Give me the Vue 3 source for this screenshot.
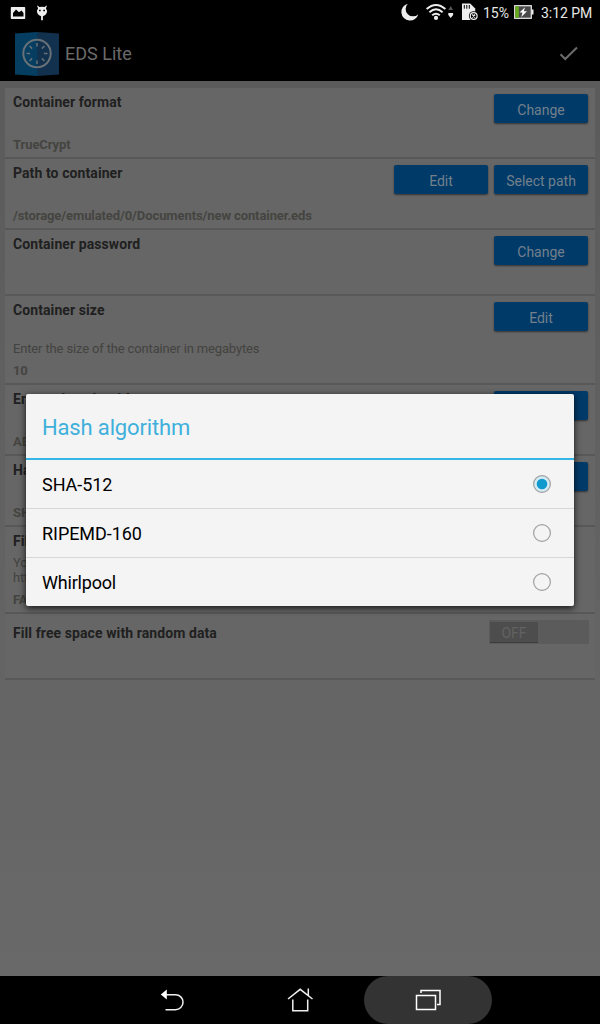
<script setup>
const rows = [
  { title: 'Container format', value: 'TrueCrypt', buttons: ['Change'], height: 71 },
  { title: 'Path to container', value: '/storage/emulated/0/Documents/new container.eds', buttons: ['Edit', 'Select path'], height: 71 },
  { title: 'Container password', buttons: ['Change'], height: 66 },
  { title: 'Container size', desc: ['Enter the size of the container in megabytes'], value: '10', buttons: ['Edit'], height: 89 },
  { title: 'Encryption algorithm', value: 'AES', buttons: ['Change'], height: 71 },
  { title: 'Hash algorithm', value: 'SHA-512', buttons: ['Change'], height: 71 },
  { title: 'File system type', desc: ['You can', 'https://'], value: 'FAT', buttons: [], height: 87 },
  { title: 'Fill free space with random data', toggle: true, buttons: [], height: 66 },
]
const options = ['SHA-512', 'RIPEMD-160', 'Whirlpool']
const selected = 'SHA-512'
const ticks = [0, 45, 90, 135, 180, 225, 270, 315]
</script>

<template>
  <div class="screen">
    <header class="status">
      <svg class="s-left" width="60" height="26" viewBox="0 0 60 26">
        <path fill="#eee" fill-rule="evenodd" d="M11.500 7h13q.7 0 .7.700v10.600q0 .7-.7.700h-13q-.7 0-.7-.700v-10.600q0-.7.700-.700zM13 16.500h10.500v-3.500l-2-2.500-2.500 1.700-3-2.700-3 3.500z" />
        <path fill="#eee" d="M37.600 5.500l1.700 1.600q2.700-.9 5.400 0l1.700-1.600.5.500-1 2.200q1.700 2.300.8 4.800-1 2.600-3.800 3.200v4h-1.800v-4q-2.800-.6-3.800-3.200-.9-2.500.8-4.800l-1-2.200z" />
        <path fill="#000" d="M39 9.700h1.700v1.600h-1.700zM43.300 9.700h1.700v1.600h-1.700z" />
      </svg>
      <svg class="s-icons" width="80" height="26" viewBox="400 0 80 26">
        <path fill="#eee" d="M407.800 3.700a7.300 7.300 0 0 0 10.500 10.500a8.600 8.600 0 1 1-10.500-10.500z" />
        <g fill="none" stroke="#eee" stroke-width="1.900">
          <path d="M426.600 9q9.400-8.200 18.800 0" />
          <path d="M429.400 12.200q6.600-5.800 13.200 0" />
          <path d="M432.200 15.300q3.800-3.300 7.600 0" />
        </g>
        <circle cx="436" cy="17.900" r="2.100" fill="#eee" />
        <path fill="#555" d="M448.300 10l2.400-4 2.400 4z" />
        <path fill="#eee" d="M448.300 13h4.800v2l-2.400 3-2.400-3z" />
        <path fill="#eee" d="M462 3.500h8.200l5 5v11.500h-13.200z" />
        <path stroke="#000" stroke-width="1" d="M464.300 5v3.700M466.800 5v3.700M469.300 5v3.700" />
        <circle cx="473.700" cy="16" r="4.800" fill="#000" />
        <circle cx="473.700" cy="16" r="3.400" fill="none" stroke="#eee" stroke-width="1.200" />
        <path stroke="#eee" stroke-width="1.200" d="M472.200 14.500l3 3M475.200 14.500l-3 3" />
      </svg>
      <span class="pct">15%</span>
      <svg class="batt" width="20" height="14" viewBox="0 0 20 14">
        <rect x=".7" y=".7" width="16.600" height="12.600" fill="#4a4a4a" stroke="#eee" stroke-width="1.200" />
        <rect x="1.300" y="1.300" width="3.600" height="11.400" fill="#67a81f" />
        <rect x="17.800" y="4.500" width="1.700" height="5" fill="#eee" />
        <path fill="#fff" d="M11 2.200l-5.500 5.400h3l-1.200 4.400 5.700-5.800h-3.100z" />
      </svg>
      <span class="time">3:12 PM</span>
    </header>

    <div class="appbar">
      <svg class="logo" width="46" height="46" viewBox="0 0 46 46">
        <path fill="#053e60" d="M1 2.500l22-1.500v44l-22-1.500z" />
        <path fill="#12314e" d="M23 1l22 1.500v41l-22 1.500z" />
        <circle cx="23" cy="22.500" r="13.700" fill="none" stroke="#687178" stroke-width="2" />
        <g stroke="#687178" stroke-width="1.500">
          <path v-for="t in ticks" :key="t" d="M23 12v3.600" :transform="`rotate(${t} 23 22.500)`" />
        </g>
      </svg>
      <span class="app-name">EDS Lite</span>
      <svg class="check" width="20" height="16" viewBox="0 0 20 16">
        <path d="M1.500 8.300l4.700 4.700L18 1.500" fill="none" stroke="#6b6b6b" stroke-width="2.100" />
      </svg>
    </div>

    <main class="content">
      <section v-for="row in rows" :key="row.title" class="row" :style="{ height: row.height + 'px' }">
        <div class="texts">
          <div class="title" :class="{ low: row.toggle }">{{ row.title }}</div>
          <div class="bottom">
            <div v-for="d in row.desc" :key="d" class="desc">{{ d }}</div>
            <div v-if="row.value" class="value">{{ row.value }}</div>
          </div>
        </div>
        <div class="actions">
          <button v-for="b in row.buttons" :key="b" class="btn">{{ b }}</button>
          <div v-if="row.toggle" class="toggle"><span>OFF</span></div>
        </div>
      </section>
    </main>

    <nav class="nav">
      <div class="key">
        <svg width="28" height="28" viewBox="158 986 28 28">
          <path d="M165 994.700h10.500a7.300 7.300 0 0 1 0 15h-10" fill="none" stroke="#eee" stroke-width="1.500" />
          <path d="M160.800 994.500l6-5v10z" fill="#fff" />
        </svg>
      </div>
      <div class="key">
        <svg width="28" height="28" viewBox="286 986 28 28" fill="none" stroke="#eee" stroke-width="1.500">
          <path d="M288 999l12.200-9.700 12.300 9.700M308.300 995.500v-7M292.800 999.500v11.300h14.900v-11.300" />
        </svg>
      </div>
      <div class="key active">
        <svg width="28" height="28" viewBox="414 986 28 28" fill="none" stroke="#fff" stroke-width="1.500">
          <rect x="416.500" y="995.500" width="19" height="14" />
          <path d="M421 993v-2.500h19v14h-3" />
        </svg>
      </div>
    </nav>

    <div class="dialog">
      <h1>Hash algorithm</h1>
      <div v-for="o in options" :key="o" class="option">
        <span>{{ o }}</span>
        <svg width="20" height="20" viewBox="0 0 20 20">
          <circle cx="10" cy="10" r="8.400" :fill="o === selected ? '#d2ebf4' : '#f4f4f4'" stroke="#a0a0a0" stroke-width="1.200" />
          <circle v-if="o === selected" cx="10" cy="10" r="5.300" fill="#0f99cc" />
        </svg>
      </div>
    </div>
  </div>
</template>

<style>
body { margin: 0; background: #000; }
</style>
<style scoped>
.screen { position: relative; width: 600px; height: 1024px; overflow: hidden; display: flex; flex-direction: column; font-family: Roboto, "Noto Sans", sans-serif; background: #000; }
.status { height: 26px; display: flex; align-items: center; color: #e8e8e8; font-size: 14px; line-height: 26px; }
.s-icons { margin-left: auto; }
.pct { width: 31px; padding-left: 3px; white-space: nowrap; }
.batt { margin-top: -2px; }
.time { width: 59px; padding-left: 7px; white-space: nowrap; font-size: 14px; letter-spacing: -.05px; }
.appbar { height: 55px; display: flex; align-items: center; padding: 0 21px 0 14px; }
.app-name { margin-left: 5px; color: #6b6b6b; font-size: 18px; }
.check { margin-left: auto; }
.content { flex: 1; padding: 7px 5px 0; background: linear-gradient(#5b5b5b, #606060 35%, #666 80%, #696969); }
.row { box-sizing: border-box; display: flex; justify-content: space-between; padding: 6px 7px 4px 8px; background: #666; border-bottom: 2px solid #585858; }
.texts { display: flex; flex-direction: column; }
.title { font-size: 14px; line-height: 17px; font-weight: 700; letter-spacing: .09px; color: #202020; white-space: nowrap; }
.title.low { padding-top: 5px; }
.bottom { margin-top: auto; }
.desc { font-size: 13px; line-height: 15px; letter-spacing: -.15px; color: #43433f; white-space: nowrap; }
.value { margin-top: 6px; font-size: 13px; line-height: 17px; font-weight: 700; letter-spacing: -.09px; color: #444440; white-space: nowrap; }
.actions { display: flex; gap: 6px; align-items: flex-start; }
.btn { width: 94px; height: 29px; padding: 3px 0 0; border: 0; border-radius: 2px; background: #003a69; color: #73808b; font: 14px Roboto, sans-serif; letter-spacing: 0; box-shadow: 0 1px 2px rgba(0, 0, 0, .5); }
.toggle { box-sizing: border-box; width: 100px; height: 24px; margin-right: -1px; padding: 2px 1px 1px; background: #5b5b5b; }
.toggle span { display: block; width: 48px; height: 20px; border-bottom: 1px solid #3b3b3b; background: #4d4d4d; color: #626262; font-size: 14px; line-height: 22px; text-align: center; }
.nav { height: 48px; display: flex; justify-content: center; }
.key { width: 128px; display: flex; align-items: center; justify-content: center; }
.key.active { background: #333; border-radius: 24px; }
.dialog { position: absolute; left: 26px; top: 394px; width: 548px; height: 212px; border-radius: 2px; background: #f4f4f4; box-shadow: 0 2px 7px rgba(0, 0, 0, .8); }
h1 { box-sizing: border-box; height: 66px; margin: 0; padding: 2px 16px 0; border-bottom: 2px solid #33b5e5; color: #3fb0dc; font-size: 22px; font-weight: 400; letter-spacing: -.15px; line-height: 64px; }
.option { box-sizing: border-box; height: 49px; display: flex; align-items: center; justify-content: space-between; padding: 0 22px 0 16px; border-bottom: 1px solid #d7d7d7; color: #000; font-size: 18px; letter-spacing: -.05px; }
.option:last-child { border-bottom: 0; height: 48px; letter-spacing: -.2px; }
</style>
